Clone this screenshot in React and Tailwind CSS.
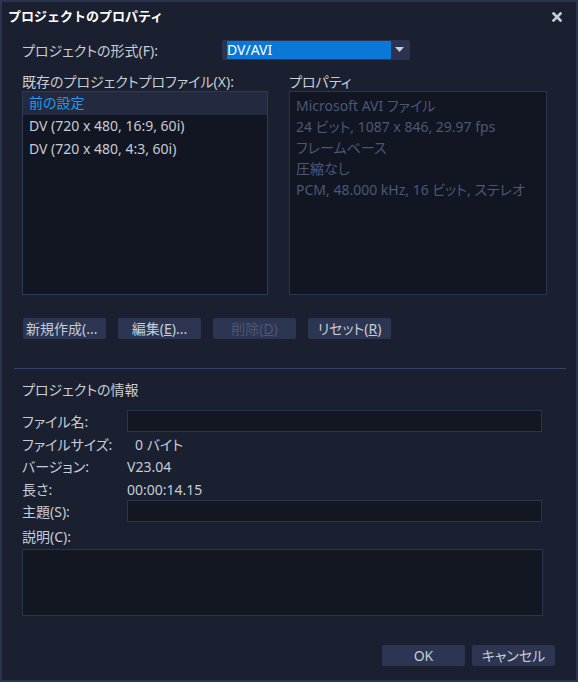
import React from 'react';

const FONT = "font-['Noto_Sans','Noto_Sans_CJK_JP',sans-serif] [font-feature-settings:'palt']";

const profiles = ['前の設定', 'DV (720 x 480, 16:9, 60i)', 'DV (720 x 480, 4:3, 60i)'];

const properties = [
  'Microsoft AVI ファイル',
  '24 ビット, 1087 x 846, 29.97 fps',
  'フレームベース',
  '圧縮なし',
  'PCM, 48.000 kHz, 16 ビット, ステレオ',
];

function Button({ children, disabled, className = '' }) {
  return (
    <button
      className={`h-[21px] w-[83px] rounded-[2px] bg-[#2c3551] leading-[21px] whitespace-nowrap overflow-hidden ${
        disabled ? 'text-[#4d5773]' : 'text-[#c7ccd6]'
      } ${className}`}
    >
      {children}
    </button>
  );
}

function InfoRow({ label, children, className = '' }) {
  return (
    <div className={`flex items-center h-[22px] ${className}`}>
      <div className="w-[105px] shrink-0">{label}</div>
      <div>{children}</div>
    </div>
  );
}

export default function App() {
  return (
    <div
      className={`w-[578px] h-[682px] bg-[#1b2030] border-2 border-[#2a3350] text-[14px] text-[#c7ccd6] flex flex-col ${FONT}`}
    >
      {/* Title bar */}
      <div className="h-[29px] flex items-center justify-between pl-[6px] pr-[14px]">
        <span className="text-[13px] font-bold text-white [font-feature-settings:normal]">
          プロジェクトのプロパティ
        </span>
        <svg width="10" height="10" viewBox="0 0 10 10">
          <path d="M1.5 1.5 L8.5 8.5 M8.5 1.5 L1.5 8.5" stroke="#c9cdd8" strokeWidth="2.6" strokeLinecap="square" />
        </svg>
      </div>

      <div className="px-[20px] flex flex-col">
        {/* Format */}
        <div className="mt-[9px] flex items-center h-[20px]">
          <div className="w-[200px] shrink-0">プロジェクトの形式(F):</div>
          <div className="w-[188px] h-[20px] rounded-[2px] bg-[#2b3350] flex items-center pl-[5px] pr-[6px]">
            <div className="w-[164px] h-[18px] bg-[#0a78d7] text-white leading-[18px]">DV/AVI</div>
            <svg className="ml-auto" width="9" height="6" viewBox="0 0 9 6">
              <path d="M0 0 H9 L4.5 5 Z" fill="#c9cdd8" />
            </svg>
          </div>
        </div>

        {/* Profiles + properties */}
        <div className="mt-[11px] flex h-[20px] items-center">
          <div className="w-[267px] shrink-0">既存のプロジェクトプロファイル(X):</div>
          <div>プロパティ</div>
        </div>
        <div className="flex gap-[21px]">
          <div className="w-[246px] h-[204px] bg-[#121622] border border-[#2f3a58]">
            {profiles.map((p, i) => (
              <div
                key={p}
                className={`h-[23px] leading-[22px] pl-[6px] ${
                  i === 0 ? 'bg-[#232a3f] text-[#1e9bf0]' : ''
                }`}
              >
                {p}
              </div>
            ))}
          </div>
          <div className="w-[258px] h-[204px] bg-[#121622] border border-[#2a3350] pl-[6px] pt-[3px] leading-[21px] text-[#4a5878]">
            {properties.map((p) => (
              <div key={p}>{p}</div>
            ))}
          </div>
        </div>

        {/* Profile buttons */}
        <div className="mt-[23px] ml-[1px] flex gap-[12px]">
          <Button className="text-left pl-[3px]">新規作成(...</Button>
          <Button>
            編集(<span className="underline">E</span>)...
          </Button>
          <Button disabled>
            削除(<span className="underline">D</span>)
          </Button>
          <Button>
            リセット(<span className="underline">R</span>)
          </Button>
        </div>

        <div className="mt-[29px] -ml-[8px] -mr-[10px] h-px bg-[#34416a]" />

        {/* Project info */}
        <div className="mt-[11px] h-[20px] leading-[20px]">プロジェクトの情報</div>
        <InfoRow label="ファイル名:" className="mt-[10px]">
          <div className="w-[415px] h-[22px] bg-[#131722] border border-[#2a3350]" />
        </InfoRow>
        <InfoRow label="ファイルサイズ:" className="mt-[1px]">
          <span className="pl-[8px]">0 バイト</span>
        </InfoRow>
        <InfoRow label="バージョン:">V23.04</InfoRow>
        <InfoRow label="長さ:" className="mt-[1px]">00:00:14.15</InfoRow>
        <InfoRow label="主題(S):">
          <div className="w-[415px] h-[22px] bg-[#131722] border border-[#2a3350]" />
        </InfoRow>
        <div className="mt-[5px] h-[20px] leading-[20px]">説明(C):</div>
        <div className="mt-[2px] w-[521px] h-[67px] bg-[#131722] border border-[#2a3350]" />

        {/* Dialog buttons */}
        <div className="mt-[29px] flex justify-end gap-[7px] mr-[1px]">
          <Button className="h-[20px] leading-[20px]">OK</Button>
          <Button className="h-[20px] leading-[20px]">キャンセル</Button>
        </div>
      </div>
    </div>
  );
}
